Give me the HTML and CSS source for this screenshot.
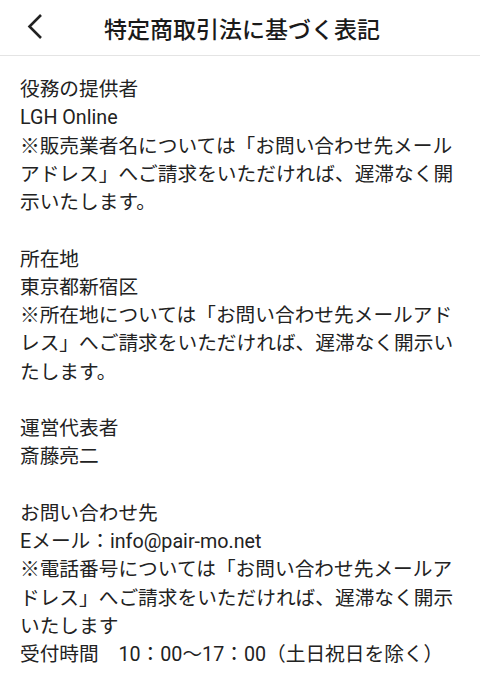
FILE: index.html
```
<!DOCTYPE html>
<html lang="ja">
<head>
<meta charset="utf-8">
<link rel="stylesheet" href="styles.css">
</head>
<body>
<header class="bar">
  <span class="back"><svg width="20" height="28" viewBox="0 0 20 28"><path d="M15 2 L3.5 13.5 L15 25" fill="none" stroke="#222" stroke-width="2.6"/></svg></span>
  <h1 class="title">特定商取引法に基づく表記</h1>
</header>
<main class="content">
  <p class="block">役務の提供者<br>LGH Online<br>※販売業者名については「お問い合わせ先メール<br>アドレス」へご請求をいただければ、遅滞なく開<br>示いたします。</p>
  <p class="block">所在地<br>東京都新宿区<br>※所在地については「お問い合わせ先メールアド<br>レス」へご請求をいただければ、遅滞なく開示い<br>たします。</p>
  <p class="block">運営代表者<br>斎藤亮二</p>
  <p class="block">お問い合わせ先<br>Eメール：info@pair-mo.net<br>※電話番号については「お問い合わせ先メールア<br>ドレス」へご請求をいただければ、遅滞なく開示<br>いたします<br>受付時間　10：00〜17：00（土日祝日を除く）</p>
</main>
</body>
</html>
```
FILE: styles.css
```
html, body {
  margin: 0;
  padding: 0;
  background: #fff;
}
body {
  font-family: Roboto, "Noto Sans CJK JP", sans-serif;
  color: #222;
  width: 480px;
  overflow: hidden;
}
.bar {
  height: 55px;
  border-bottom: 1px solid #e4e4e4;
  display: flex;
  align-items: center;
  position: relative;
}
.back {
  position: absolute;
  left: 26px;
  top: 13px;
  display: block;
}
.title {
  margin: 0;
  width: 100%;
  text-align: center;
  font-size: 23px;
  font-weight: 500;
  color: #1a1a1a;
  padding-left: 4px;
}
.content {
  padding: 20px 20px 0 20px;
}
.block {
  margin: 0 0 28.25px 0;
  font-size: 19.7px;
  line-height: 28.25px;
  white-space: nowrap;
}
```
